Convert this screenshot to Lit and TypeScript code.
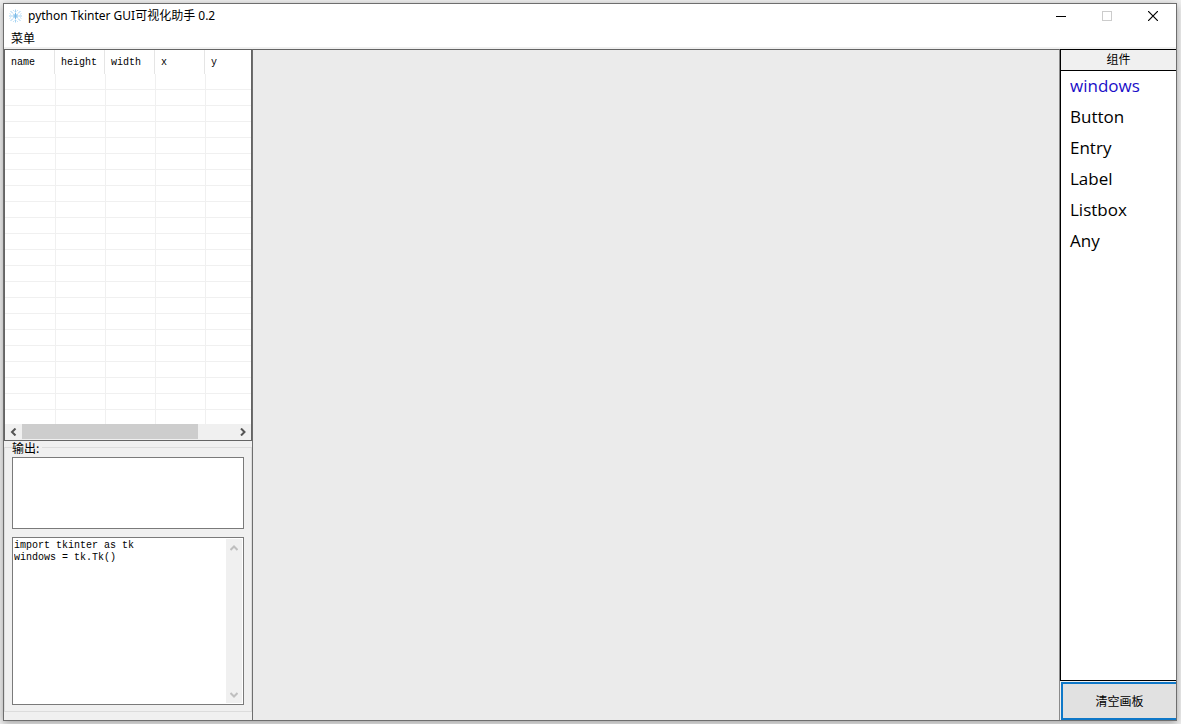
import { LitElement, html, css, svg } from "lit";
import { customElement, state } from "lit/decorators.js";

const COLUMNS = ["name", "height", "width", "x", "y"];
const EMPTY_ROWS = 60;
const WIDGETS = ["windows", "Button", "Entry", "Label", "Listbox", "Any"];

const chevron = (points: string) => html`
  <svg width="8" height="8" viewBox="0 0 8 8" aria-hidden="true">
    ${svg`<polyline points=${points} fill="none" stroke="currentColor" stroke-width="2" />`}
  </svg>
`;
const LEFT = "5.5,0.5 2,4 5.5,7.5";
const RIGHT = "2,0.5 5.5,4 2,7.5";
const UP = "0.5,6 4,2.5 7.5,6";
const DOWN = "0.5,2 4,5.5 7.5,2";

@customElement("title-bar")
class TitleBar extends LitElement {
  static styles = css`
    :host { display: block; background: #fff; }
    .bar { display: flex; align-items: center; height: 23px; padding-left: 5px; }
    .title { flex: 1; margin-left: 6px; font: 12px/16px "Noto Sans", "Noto Sans CJK SC", sans-serif; white-space: nowrap; }
    .control {
      display: flex; align-items: center; justify-content: center;
      width: 46px; height: 23px; padding: 0; border: 0; background: none; color: #000;
    }
    .control:disabled { color: #ccc; }
    .controls { display: flex; }
    .menu { display: flex; height: 20px; padding-left: 7px; border-bottom: 2px solid #f0f0f0; }
    .menu-item {
      padding: 2px 0 0; border: 0; background: none; color: #000;
      font: 12px/18px "Noto Sans CJK SC", sans-serif;
    }
  `;
  render() {
    return html`
      <div class="bar">
        <svg width="13" height="14" viewBox="0 0 13 14" fill="none" aria-hidden="true">
          <g stroke="#a3d3f3">
            <path d="M6.5 .5v3M6.5 10.500v3M0 7h3M10 7h3M1.500 2l2.500 2.500M11.500 2L9 4.500M1.500 12L4 9.500M11.500 12L9 9.500" />
            <path d="M4 1l1.500 1.500M9 1L7.500 2.500M4 13l1.500-1.500M9 13l-1.500-1.500M.5 4.500L2 5.500M12.500 4.500L11 5.500M.5 9.500L2 8.500M12.500 9.500L11 8.500" stroke="#c4e2f6" />
          </g>
          <path d="M6.500 4v6M3.500 7h6M4.500 5l4 4M8.500 5l-4 4" stroke="#7abbe8" />
        </svg>
        <span class="title">python Tkinter GUI可视化助手 0.2</span>
        <div class="controls">
          <button class="control" aria-label="最小化">
            <svg width="10" height="10" viewBox="0 0 10 10"><path d="M0 5.500h10" stroke="currentColor" /></svg>
          </button>
          <button class="control" aria-label="最大化" disabled>
            <svg width="10" height="10" viewBox="0 0 10 10"><rect x=".5" y=".5" width="9" height="9" fill="none" stroke="currentColor" /></svg>
          </button>
          <button class="control" aria-label="关闭">
            <svg width="10" height="10" viewBox="0 0 10 10"><path d="M0 0l10 10M10 0L0 10" stroke="currentColor" stroke-width="1.200" /></svg>
          </button>
        </div>
      </div>
      <nav class="menu"><button class="menu-item">菜单</button></nav>
    `;
  }
}

@customElement("property-grid")
class PropertyGrid extends LitElement {
  static styles = css`
    :host {
      display: flex; flex-direction: column; min-height: 0; background: #fff;
      border: 1px solid #646464; border-top: 0;
    }
    .view { flex: 1; min-height: 0; overflow: hidden; }
    .grid { width: 250px; table-layout: fixed; border-collapse: separate; border-spacing: 0; }
    th {
      box-sizing: border-box; height: 24px; padding: 2px 0 0 6px; border-right: 1px solid #e5e5e5;
      font: 10px/12px "Liberation Mono", monospace; text-align: left;
    }
    td { box-sizing: border-box; height: 16px; padding: 0; border-bottom: 1px solid #f0f0f0; }
    td + td { border-left: 1px solid #f0f0f0; }
    .scroll { display: flex; height: 16px; background: #f0f0f0; color: #555; }
    .arrow {
      display: flex; align-items: center; justify-content: center;
      width: 17px; padding: 0; border: 0; background: none; color: inherit;
    }
    .track { flex: 1; }
    .thumb { width: 83%; height: 15px; background: #cdcdcd; }
  `;
  render() {
    return html`
      <div class="view">
        <table class="grid">
          <thead><tr>${COLUMNS.map((c) => html`<th scope="col">${c}</th>`)}</tr></thead>
          <tbody>
            ${Array.from({ length: EMPTY_ROWS }, () => html`<tr>${COLUMNS.map(() => html`<td></td>`)}</tr>`)}
          </tbody>
        </table>
      </div>
      <div class="scroll">
        <button class="arrow" aria-label="向左滚动">${chevron(LEFT)}</button>
        <div class="track"><div class="thumb"></div></div>
        <button class="arrow" aria-label="向右滚动">${chevron(RIGHT)}</button>
      </div>
    `;
  }
}

@customElement("output-panel")
class OutputPanel extends LitElement {
  static styles = css`
    :host { display: block; padding-bottom: 8px; }
    .group {
      display: flex; flex-direction: column; gap: 8px; min-width: 0; margin: 0;
      padding: 4px 7px 6px; border: 1px solid #dcdcdc;
    }
    .caption { box-sizing: border-box; height: 12px; padding: 0 3px 0 0; font: 12px/14px "Noto Sans CJK SC", sans-serif; }
    .box { display: flex; box-sizing: border-box; border: 1px solid #7a7a7a; background: #fff; }
    .short { height: 72px; }
    .tall { height: 168px; padding: 1px; }
    .text {
      flex: 1; min-width: 0; margin: 0; padding: 1px 0 0; border: 0; outline: 0;
      resize: none; overflow: hidden; background: none; color: #000;
      font: 10px/12px "Liberation Mono", monospace;
    }
    .scroll { display: flex; flex-direction: column; justify-content: space-between; width: 16px; background: #f0f0f0; color: #bfbfbf; }
    .arrow {
      display: flex; align-items: center; justify-content: center;
      height: 17px; padding: 0; border: 0; background: none; color: inherit;
    }
  `;
  render() {
    return html`
      <fieldset class="group">
        <legend class="caption">输出:</legend>
        <div class="box short"><textarea class="text" aria-label="输出"></textarea></div>
        <div class="box tall">
          <textarea class="text" aria-label="代码" spellcheck="false" .value=${"import tkinter as tk\nwindows = tk.Tk()"}></textarea>
          <div class="scroll">
            <button class="arrow" aria-label="向上滚动" disabled>${chevron(UP)}</button>
            <button class="arrow" aria-label="向下滚动" disabled>${chevron(DOWN)}</button>
          </div>
        </div>
      </fieldset>
    `;
  }
}

@customElement("widget-list")
class WidgetList extends LitElement {
  @state() private selected = "windows";

  static styles = css`
    :host { display: flex; flex-direction: column; background: #f0f0f0; }
    .palette { flex: 1; display: flex; flex-direction: column; min-height: 0; border: solid #000; border-width: 1px 0 1px 1px; background: #fff; }
    .heading {
      height: 20px; margin: 0; border-bottom: 1px solid #000; background: #f0f0f0;
      font-size: 12px; font-weight: 400; line-height: 20px; text-align: center;
    }
    .list { margin: 0; padding: 0; list-style: none; }
    .item {
      display: block; width: 100%; height: 31px; padding: 0 0 2px 9px; border: 0; background: none;
      color: #000; font: 17px/29px "Open Sans", sans-serif; text-align: left;
    }
    .item.selected { color: #1a0dc8; }
    .clear {
      box-sizing: border-box; height: 38px; margin: 1px 0 0 1px; padding: 0;
      border: 2px solid #0f78c8; border-right: 0; background: #e1e1e1; color: #000;
      font: 12px/16px "Noto Sans CJK SC", sans-serif;
    }
  `;
  render() {
    return html`
      <section class="palette">
        <h2 class="heading">组件</h2>
        <ul class="list">
          ${WIDGETS.map((w) => html`
            <li><button class="item ${w === this.selected ? "selected" : ""}" @click=${() => (this.selected = w)}>${w}</button></li>
          `)}
        </ul>
      </section>
      <button class="clear">清空画板</button>
    `;
  }
}

@customElement("app-root")
class AppRoot extends LitElement {
  static styles = css`
    :host {
      display: flex; box-sizing: border-box; height: 100vh; padding: 3px 4px 3px 3px; overflow: hidden;
      background: #f0f0f0; color: #000; font-family: "Open Sans", "Noto Sans CJK SC", sans-serif;
    }
    .window {
      flex: 1; display: flex; flex-direction: column; min-width: 0;
      border: 1px solid #6e6e6e; box-shadow: 0 2px 8px rgba(0, 0, 0, 0.35);
    }
    .body { flex: 1; display: flex; min-height: 0; background: #ebebeb; }
    .side, .canvas { border-top: 1px solid #646464; }
    .side { display: flex; flex-direction: column; width: 248px; border-right: 1px solid #6e6e6e; background: #f0f0f0; }
    .grid { flex: 1; }
    .canvas { flex: 1; border-right: 1px solid #8a8a8a; }
    .widgets { width: 116px; }
  `;
  render() {
    return html`
      <div class="window">
        <title-bar></title-bar>
        <main class="body">
          <aside class="side">
            <property-grid class="grid"></property-grid>
            <output-panel></output-panel>
          </aside>
          <section class="canvas" aria-label="画板"></section>
          <widget-list class="widgets"></widget-list>
        </main>
      </div>
    `;
  }
}
